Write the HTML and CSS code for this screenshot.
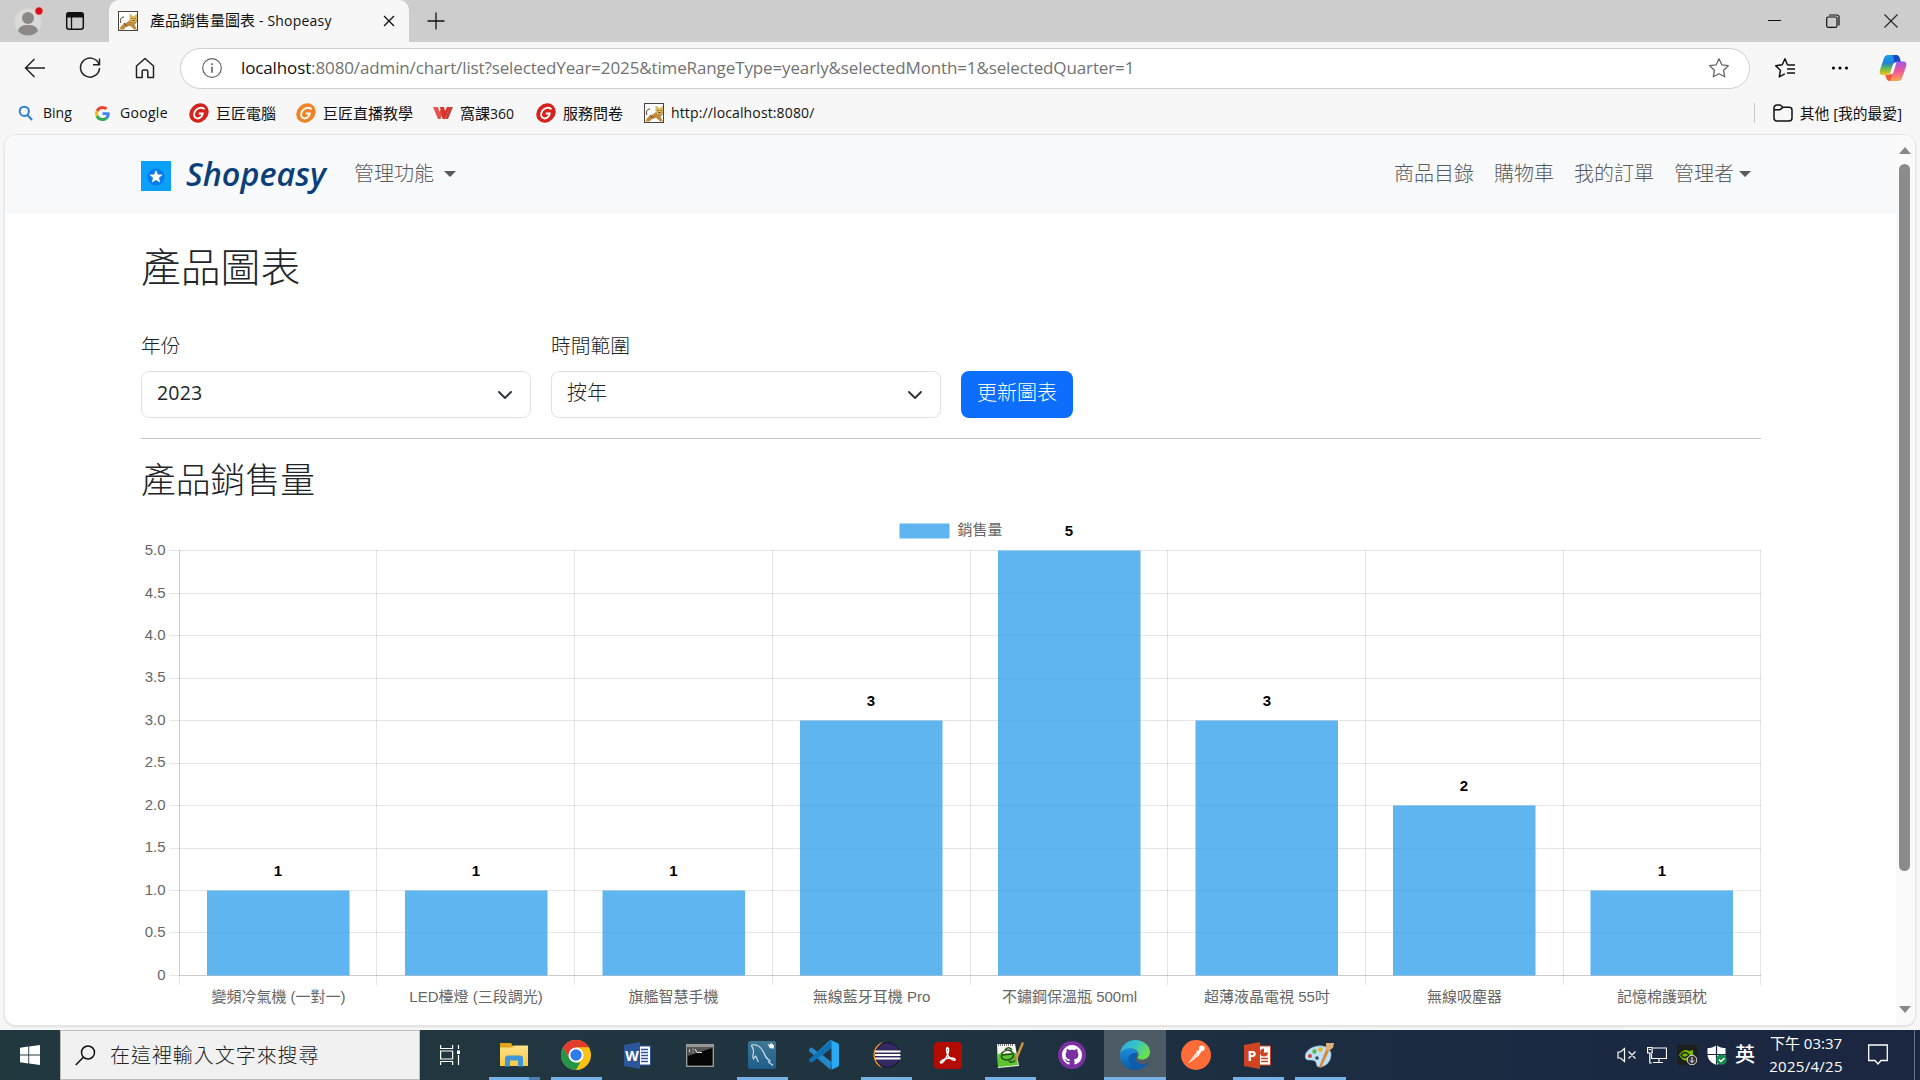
FILE: index.html
```html
<!DOCTYPE html>
<html lang="zh-Hant">
<head>
<meta charset="utf-8">
<title>產品銷售量圖表 - Shopeasy</title>
<link rel="stylesheet" href="styles.css">
</head>
<body>
<svg class="defs" width="0" height="0" aria-hidden="true">
  <defs>
    <linearGradient id="cp1" x1="0" y1="0" x2="0" y2="1"><stop offset="0" stop-color="#1a9ff0"/><stop offset=".4" stop-color="#1f80d8"/><stop offset=".65" stop-color="#5fb85a"/><stop offset="1" stop-color="#f5c31c"/></linearGradient>
    <linearGradient id="cp2" x1="0" y1="0" x2="0" y2="1"><stop offset="0" stop-color="#a05ae8"/><stop offset=".5" stop-color="#f0569a"/><stop offset="1" stop-color="#fba94c"/></linearGradient>
    <linearGradient id="edgeA" x1="0" y1="0" x2="1" y2=".5"><stop offset="0" stop-color="#2ba8e0"/><stop offset=".5" stop-color="#35c3c8"/><stop offset="1" stop-color="#6be04e"/></linearGradient>
    <linearGradient id="edgeB" x1="0" y1="0" x2="0" y2="1"><stop offset="0" stop-color="#1b8fe0"/><stop offset="1" stop-color="#0c59a4"/></linearGradient>
    <linearGradient id="folderG" x1="0" y1="0" x2="0" y2="1"><stop offset="0" stop-color="#ffe08a"/><stop offset="1" stop-color="#fcc93f"/></linearGradient>
    <linearGradient id="mysqlG" x1="0" y1="0" x2="0" y2="1"><stop offset="0" stop-color="#3f7793"/><stop offset="1" stop-color="#1f5e8c"/></linearGradient>
    <symbol id="cat" viewBox="0 0 20 20">
      <rect x=".5" y=".5" width="19" height="19" fill="#fff" stroke="#4a4440"/>
      <path d="M1.500 18.500c1-4 4-6 7-7l3.500-2.500V3l2.500 2h2L19 3v6c0 2-1 3.500-2.500 4.500l2.500 5h-3l-3.500-3.500-4 .5-3 3z" fill="#c08c3c"/>
      <path d="M11.500 3l2.500 2h2.500L19 3v5.500l-2 2.500h-3.500l-2-2.500z" fill="#dcb95e"/>
      <path d="M3 12c-1.500-3 0-6 3-6M6 12l3 3.500M13.500 7.500h1M16.500 7.500h1M14.500 9.500h2" fill="none" stroke="#4b3b2a"/>
    </symbol>
    <symbol id="gjun" viewBox="0 0 20 20">
      <ellipse cx="10" cy="10" rx="10.400" ry="9" transform="rotate(-45 10 10)" fill="currentColor"/>
      <path d="M15.500 6.200C13 3.800 8.500 4.600 6.200 8c-2 3.300-1.200 7 1.800 7.400 2.800.300 5.200-1.600 5.700-4.900H9.800" fill="none" stroke="#fff" stroke-width="1.900"/>
    </symbol>
  </defs>
</svg>

<div class="tabstrip">
  <svg class="profile" width="30" height="30" viewBox="0 0 30 30"><circle cx="15" cy="16" r="13.500" fill="#dcdad8"/><circle cx="15" cy="12" r="6" fill="#8b8885"/><path d="M5 25c1-5 5-6 10-6s9 1 10 6c-5 6-15 6-20 0z" fill="#8b8885"/><circle cx="26" cy="5" r="4.200" fill="#d70f16" stroke="#e9d4d4"/></svg>
  <svg class="workspaces" width="20" height="20" viewBox="0 0 20 20"><rect x="1.700" y="1.700" width="16.600" height="16.600" rx="2.500" fill="none" stroke="#111" stroke-width="1.500"/><path d="M1.500 6.500V4a3 3 0 0 1 3-3h11a3 3 0 0 1 3 3v2.500z" fill="#111"/><path d="M6.500 6v12" stroke="#111" stroke-width="1.300"/></svg>
  <div class="tab">
    <svg width="20" height="20"><use href="#cat"/></svg>
    <span class="tab-title">產品銷售量圖表 <span class="lat">- Shopeasy</span></span>
    <svg class="tab-close" width="12" height="12" viewBox="0 0 12 12"><path d="M1 1l10 10M11 1L1 11" stroke="#111" stroke-width="1.400"/></svg>
  </div>
  <svg class="newtab" width="18" height="18" viewBox="0 0 18 18"><path d="M9 .5v17M.5 9h17" stroke="#111" stroke-width="1.300"/></svg>
  <div class="winctl">
    <svg width="14" height="14" viewBox="0 0 14 14"><path d="M0 6.500h13" stroke="#111"/></svg>
    <svg width="14" height="14" viewBox="0 0 14 14" fill="none" stroke="#111" stroke-width="1.200"><rect x=".7" y="3" width="10.300" height="10.300" rx="1.500"/><path d="M3 1h8a2 2 0 0 1 2 2v8.500"/></svg>
    <svg width="14" height="14" viewBox="0 0 14 14"><path d="M.5.500l13 13M13.500.500l-13 13" stroke="#222" stroke-width="1.100"/></svg>
  </div>
</div>

<div class="toolbar">
  <div class="navbtns">
    <svg width="22" height="22" viewBox="0 0 22 22" fill="none" stroke="#222" stroke-width="1.500"><path d="M21 11H2M10.500 2L1.500 11l9 9"/></svg>
    <svg width="22" height="22" viewBox="0 0 22 22" fill="none" stroke="#222" stroke-width="1.500"><path d="M20 7.500A9.500 9.500 0 1 0 20.500 11M20.500 1.500v6.300H14"/></svg>
    <svg width="22" height="22" viewBox="0 0 22 22" fill="none" stroke="#222" stroke-width="1.500" stroke-linejoin="round"><path d="M2.500 9L11 1.500 19.500 9v11.500h-5.700v-6.200q0-1.300-1.300-1.300h-3q-1.300 0-1.300 1.300v6.200H2.500z"/></svg>
  </div>
  <div class="address">
    <svg width="20" height="20" viewBox="0 0 20 20"><circle cx="10" cy="10" r="9.300" fill="none" stroke="#666" stroke-width="1.200"/><path d="M10 8.700v6M10 5.300v1.600" stroke="#555" stroke-width="1.500"/></svg>
    <span class="url"><b>localhost</b>:8080/admin/chart/list?selectedYear=2025&amp;timeRangeType=yearly&amp;selectedMonth=1&amp;selectedQuarter=1</span>
    <svg width="22" height="22" viewBox="0 0 22 22"><path d="M11 1.800l2.800 6 6.500.9-4.700 4.600 1.100 6.500-5.700-3.100-5.700 3.100 1.100-6.500L1.700 8.700l6.500-.9z" fill="none" stroke="#666" stroke-width="1.300" stroke-linejoin="round"/></svg>
  </div>
  <div class="tools">
    <svg width="22" height="22" viewBox="0 0 22 22" fill="none" stroke="#111" stroke-width="1.500" stroke-linejoin="round"><path d="M13.500 8L11 1.800 8.200 7.800l-6.500.9 4.700 4.600-1.100 6.500 5.500-3M13.500 8H21M13 12h8M13 16h8"/></svg>
    <svg width="22" height="22" viewBox="0 0 22 22"><circle cx="4.500" cy="11" r="1.600"/><circle cx="11" cy="11" r="1.600"/><circle cx="17.500" cy="11" r="1.600"/></svg>
    <svg width="28" height="28" viewBox="0 0 28 28"><path d="M9 1h8c2 0 3 1 4 4l1 4h-5c-2 0-3 1-3.500 3l-2 6c-.7 2-2 3-4 3H4c-3 0-4-2-3-5L5 4c.7-2 2-3 4-3z" fill="url(#cp1)"/><path d="M14 1h3c2 0 3 1 4 4l1 4h-5l-1.500.500z" fill="#1748c8"/><path d="M19 27h-8c-2 0-3-1-4-4l-.5-2h2.500c2 0 3-1 3.500-3l3-9c.7-1 1.500-1.500 3-1.500H24c3 0 4 2 3 5l-4 11.500c-.7 2-2 3-4 3z" fill="url(#cp2)"/><path d="M11 27c-2 0-3-1-4-4l-.5-2H9c2 0 3-1 3.500-3l.5 4z" fill="#f2573c"/><path d="M14 11c.7-2 1.500-2.500 3.500-2.500L14.500 18c-.5 1.500-1 2-3 2.500z" fill="#fff"/></svg>
  </div>
</div>

<div class="bookmarks">
  <div class="bm bing"><svg width="15" height="16" viewBox="0 0 15 16" fill="none" stroke="#2f7fd0" stroke-width="2"><circle cx="6.300" cy="6.300" r="4.600"/><path d="M9.500 10l4.500 5"/></svg><span>Bing</span></div>
  <div class="bm google"><svg width="15" height="15" viewBox="0 0 48 48"><path fill="#EA4335" d="M24 9.500c3.500 0 6.700 1.200 9.200 3.600l6.900-6.900C35.900 2.400 30.500 0 24 0 14.600 0 6.500 5.400 2.600 13.200l8 6.200C12.400 13.700 17.700 9.500 24 9.500z"/><path fill="#4285F4" d="M47 24.600c0-1.600-.2-3.100-.4-4.600H24v9h12.900c-.6 3-2.300 5.500-4.800 7.200l7.700 6C44.400 38 47 32 47 24.600z"/><path fill="#FBBC05" d="M10.500 28.600c-.5-1.500-.8-3-.8-4.600s.3-3.100.8-4.600l-8-6.200C.9 16.500 0 20.100 0 24s.9 7.500 2.600 10.800z"/><path fill="#34A853" d="M24 48c6.500 0 11.900-2.100 15.900-5.800l-7.700-6c-2.200 1.500-4.900 2.300-8.200 2.300-6.300 0-11.600-4.200-13.500-9.900l-8 6.200C6.500 42.600 14.600 48 24 48z"/></svg><span>Google</span></div>
  <div class="bm red"><svg width="20" height="20"><use href="#gjun"/></svg><span>巨匠電腦</span></div>
  <div class="bm orange"><svg width="20" height="20"><use href="#gjun"/></svg><span>巨匠直播教學</span></div>
  <div class="bm"><svg width="20" height="14" viewBox="0 0 20 14"><path d="M0 1h5l1.500 5L8 3l3 0-3.500 10H5z" fill="#e8524c"/><path d="M7 1h4l1 4 2-4h3l-5 12H9.500z" fill="#d9342f"/><path d="M16.500 1H20l-5 12h-3z" fill="#c9403c"/></svg><span>窩課<span class="digits">360</span></span></div>
  <div class="bm red"><svg width="20" height="20"><use href="#gjun"/></svg><span>服務問卷</span></div>
  <div class="bm local"><svg width="20" height="20"><use href="#cat"/></svg><span>http://localhost:8080/</span></div>
  <div class="bm other"><svg width="20" height="18" viewBox="0 0 20 18" fill="none" stroke="#111" stroke-width="1.500"><path d="M1 4a3 3 0 0 1 3-3h3l3 2.300h6a3 3 0 0 1 3 3V14a3 3 0 0 1-3 3H4a3 3 0 0 1-3-3zM1 5.700h6l3-2.400"/></svg><span>其他 [我的最愛]</span></div>
</div>

<div class="frame">
  <div class="page">
    <nav class="navbar">
      <svg class="logo" width="30" height="30" viewBox="0 0 30 30"><rect width="30" height="30" fill="#0aa0fb"/><circle cx="15" cy="16" r="8.500" fill="#0a70e8" opacity=".75"/><path d="M15 9l1.900 4.400 4.700.3-3.600 3.100 1.200 4.700-4.200-2.600-4.200 2.600 1.200-4.700-3.600-3.100 4.700-.3z" fill="#fff"/></svg>
      <span class="brand">Shopeasy</span>
      <span class="link admin">管理功能<i class="caret"></i></span>
      <div class="right">
        <span class="link">商品目錄</span>
        <span class="link">購物車</span>
        <span class="link">我的訂單</span>
        <span class="link user">管理者<i class="caret"></i></span>
      </div>
    </nav>
    <main class="content">
      <h1>產品圖表</h1>
      <form class="filters">
        <div class="field">
          <label>年份</label>
          <div class="select"><span class="num">2023</span><svg width="16" height="16" viewBox="0 0 16 16"><path d="M2 5l6 6 6-6" fill="none" stroke="#343a40" stroke-width="2" stroke-linecap="round" stroke-linejoin="round"/></svg></div>
        </div>
        <div class="field">
          <label>時間範圍</label>
          <div class="select"><span>按年</span><svg width="16" height="16" viewBox="0 0 16 16"><path d="M2 5l6 6 6-6" fill="none" stroke="#343a40" stroke-width="2" stroke-linecap="round" stroke-linejoin="round"/></svg></div>
        </div>
        <button type="button" class="btn">更新圖表</button>
      </form>
      <hr>
      <h2>產品銷售量</h2>
      <svg class="chart" width="1621" height="500" viewBox="0 0 1621 500">
        <g class="grid">
          <path d="M28.500 35.500H1620M28.500 78.500H1620M28.500 120.500H1620M28.500 163.500H1620M28.500 205.500H1620M28.500 248.500H1620M28.500 290.500H1620M28.500 333.500H1620M28.500 375.500H1620M28.500 417.500H1620M28.500 460.500H1620"/>
          <path d="M38.500 35v435M235.500 35v435M433.500 35v435M631.500 35v435M829.500 35v435M1026.500 35v435M1224.500 35v435M1422.500 35v435M1619.500 35v435"/>
          <path d="M38.500 35v425M38 460.500H1620"/>
        </g>
        <g class="bars">
          <rect x="66" y="375.500" width="142.500" height="85"/>
          <rect x="264" y="375.500" width="142.500" height="85"/>
          <rect x="461.500" y="375.500" width="142.500" height="85"/>
          <rect x="659" y="205.500" width="142.500" height="255"/>
          <rect x="857" y="35.500" width="142.500" height="425"/>
          <rect x="1054.500" y="205.500" width="142.500" height="255"/>
          <rect x="1252" y="290.500" width="142.500" height="170"/>
          <rect x="1449.500" y="375.500" width="142.500" height="85"/>
          <rect x="758.500" y="8.500" width="50" height="15"/>
        </g>
        <text class="lbl" x="816.500" y="20">銷售量</text>
        <g class="lbl yt">
          <text x="24.500" y="40">5.0</text><text x="24.500" y="83">4.5</text><text x="24.500" y="125">4.0</text><text x="24.500" y="167">3.5</text><text x="24.500" y="210">3.0</text><text x="24.500" y="252">2.5</text><text x="24.500" y="295">2.0</text><text x="24.500" y="337">1.5</text><text x="24.500" y="380">1.0</text><text x="24.500" y="422">0.5</text><text x="24.500" y="465">0</text>
        </g>
        <g class="lbl xt">
          <text x="137.500" y="487">變頻冷氣機 (一對一)</text><text x="335" y="487">LED檯燈 (三段調光)</text><text x="532.500" y="487">旗艦智慧手機</text><text x="730.500" y="487">無線藍牙耳機 Pro</text><text x="928.500" y="487">不鏽鋼保溫瓶 500ml</text><text x="1126" y="487">超薄液晶電視 55吋</text><text x="1323.500" y="487">無線吸塵器</text><text x="1521" y="487">記憶棉護頸枕</text>
        </g>
        <g class="val">
          <text x="137" y="361">1</text><text x="335" y="361">1</text><text x="532.500" y="361">1</text><text x="730" y="191">3</text><text x="928" y="21">5</text><text x="1126" y="191">3</text><text x="1323" y="276">2</text><text x="1521" y="361">1</text>
        </g>
      </svg>
    </main>
  </div>
  <div class="scrollbar"><i class="up"></i><i class="thumb"></i><i class="down"></i></div>
</div>

<div class="taskbar">
  <div class="start"><svg width="20" height="20" viewBox="0 0 20 20" fill="#fff"><path d="M0 2.800l8.300-1.200v8H0zM9.200 1.500L20 0v9.600H9.200zM0 10.400h8.300v8L0 17.200zM9.200 10.400H20V20L9.200 18.500z"/></svg></div>
  <div class="search"><svg width="21" height="21" viewBox="0 0 21 21" fill="none" stroke="#111" stroke-width="1.500"><circle cx="13" cy="7.500" r="6.500"/><path d="M8.300 12.200L.8 20"/></svg><span>在這裡輸入文字來搜尋</span></div>
  <div class="taskview"><svg width="20" height="20" viewBox="0 0 20 20" fill="none" stroke="#fff" stroke-width="1.200"><path d="M.6 0v3.500h12V0M.6 20v-3.500h12V20M.6 6h12v8H.6zM18.500 0v4M18.500 10v10"/><path d="M17 5.500h3v3.500h-3z" fill="#fff" stroke="none"/></svg></div>
  <div class="apps">
    <div class="app run stack"><svg width="28" height="24" viewBox="0 0 28 24"><path d="M0 0h11l2 3h15v5H0z" fill="#e2a21a"/><path d="M0 4.500h12l2-2h14V23H0z" fill="url(#folderG)"/><path d="M5 23.500v-8q0-3 3-3h12q3 0 3 3v8h-5v-6h-8v6z" fill="#3f97d8"/></svg></div>
    <div class="app run"><svg width="30" height="30" viewBox="0 0 30 30"><circle cx="15" cy="15" r="15" fill="#fbc116"/><path d="M2 7.500A15 15 0 0 1 28 7.500H15L8.500 18.800z" fill="#e33b2e"/><path d="M2 7.500l6.500 11.300 6.500 3.700h6.500L15 30A15 15 0 0 1 2 7.500z" fill="#229547"/><path d="M21.500 18.700L15 30c11 0 17.500-12 13-22.500H15z" fill="#fbc116"/><circle cx="15" cy="15" r="7.500" fill="#fff"/><circle cx="15" cy="15" r="5.700" fill="#2b7de9"/></svg></div>
    <div class="app"><svg width="28" height="27" viewBox="0 0 28 27"><path d="M14 4h12.500v19H14z" fill="#fff" stroke="#2b579a"/><path d="M17 7.500h7M17 10.500h7M17 13.500h7M17 16.500h7M17 19.500h7" stroke="#2b579a" stroke-width="1.300"/><path d="M0 3L16 0v27L0 24z" fill="#2b579a"/><text class="letter" x="8" y="18.500">W</text></svg></div>
    <div class="app"><svg width="28" height="23" viewBox="0 0 28 23"><rect x=".7" y=".7" width="26.600" height="21.600" fill="#050505" stroke="#9a9a9a" stroke-width="1.400"/><path d="M1.500 1.500h25V4L1.500 12z" fill="#555"/><path d="M1 2h26" stroke="#ddd"/><path d="M3.500 5.500v2.500M7 4.800v1M7 7.500v1M9 5l2 3.500h5" stroke="#ddd" fill="none"/></svg></div>
    <div class="app run"><svg width="28" height="28" viewBox="0 0 28 28"><rect width="28" height="28" rx="2.500" fill="url(#mysqlG)"/><path d="M3.500 4c5-1 9 1 12 7 2 5 3 7 6.500 8.500l-1.500 1.500 4.500 3.500M3.500 4c0 2 2 3 2 6s-1.500 5 0 8l2-3c1.500 1.500 1.500 4 3 6" fill="none" stroke="#d5e5ee" stroke-width="1.100"/><path d="M19.500 2.500l2 1.500 1.500-2 3 2.500-.5 3.500-2-1-1.500.5z" fill="#fff"/></svg></div>
    <div class="app"><svg width="30" height="30" viewBox="0 0 100 100"><path d="M75 1c-2-1-5-1-7 1L28 39 10 26c-1.500-1-4-1-5 0L0 31c-2 2-2 4 0 6l71 62 4-26-30-23 30-23z" fill="#2489ca"/><path d="M0 69l5 5c1.500 1 4 1 5.500 0L75 27V1L1 63c-2 2-2 4-1 6z" fill="#1070b3"/><path d="M75 1l21 10c2 1 4 3 4 6v66c0 3-2 5-4 6L75 99z" fill="#2aaaf2"/></svg></div>
    <div class="app run"><svg width="30" height="28" viewBox="0 0 30 28"><path d="M12 .7a14 14 0 0 0 0 26.600A17 17 0 0 1 12 .7z" fill="#f39426"/><circle cx="16.700" cy="14" r="12.500" fill="#332a61" stroke="#16122e"/><path d="M4 10.500h25.500M4 14h25.500M4 17.500h25.500" stroke="#fff" stroke-width="2"/></svg></div>
    <div class="app"><svg width="28" height="27" viewBox="0 0 28 27"><rect width="28" height="27" rx="4" fill="#b30b00"/><path d="M13.500 5.500c1.700.5 1.300 4.500-.3 8-1.700 4-5 8.300-6.500 7.300-1.500-1.300 3-3.800 7.500-4.500s7.300 0 7 1.400c-.5 1.500-4.200 0-6.500-3-2.200-3-2.800-8.500-1.200-9.200z" fill="none" stroke="#fff" stroke-width="1.500"/></svg></div>
    <div class="app run"><svg width="28" height="28" viewBox="0 0 28 28"><path d="M1 3h18l4 22-21 2z" fill="#f7f7f0"/><path d="M2 13l18-1 2 12-20 2z" fill="#5cc431"/><path d="M2 4h16" stroke="#777" stroke-width="2" stroke-dasharray="1 1"/><path d="M5 13c4-5 9-5 12-1 2 4-2 7-6 7s-7-3-5-5l10-1M9 9c2-3 5-3 7 0M12 18c2 5 6 3 7 1" stroke="#254d19" fill="none" stroke-width="1.500"/><path d="M26 1l2 1-7 17-2 1v-2z" fill="#dca343" stroke="#8b5c25" stroke-width=".5"/></svg></div>
    <div class="app"><svg width="28" height="28" viewBox="0 0 28 28"><circle cx="14" cy="14" r="14" fill="#7a30a0"/><path transform="translate(4 4) scale(1.250)" fill="#fff" d="M8 0C3.580 0 0 3.580 0 8c0 3.540 2.290 6.530 5.470 7.590.4.070.55-.17.55-.38 0-.19-.01-.82-.01-1.490-2.010.37-2.530-.49-2.690-.94-.09-.23-.48-.94-.82-1.130-.28-.15-.68-.52-.01-.53.630-.01 1.080.58 1.230.82.720 1.210 1.870.87 2.330.66.070-.52.280-.87.510-1.070-1.780-.2-3.640-.89-3.640-3.950 0-.87.310-1.590.82-2.150-.08-.2-.36-1.020.08-2.120 0 0 .67-.21 2.200.82.640-.18 1.320-.27 2-.27s1.360.09 2 .27c1.530-1.040 2.200-.82 2.200-.82.440 1.100.16 1.920.08 2.120.51.560.82 1.270.82 2.150 0 3.070-1.870 3.750-3.650 3.950.29.250.54.730.54 1.480 0 1.070-.01 1.930-.01 2.200 0 .21.150.46.550.38A8.010 8.010 0 0 0 16 8c0-4.420-3.580-8-8-8z"/></svg></div>
    <div class="app run active"><svg width="30" height="30" viewBox="0 0 30 30"><path d="M0 14C1 5 8 0 15 0c9 0 15 6 15 12 0 5-4 7.500-8 7.500s-5-1.500-4-3c2-3-1-8-7-8-5 0-9 2-11 5.500z" fill="url(#edgeA)"/><path d="M0 14C1 11 5 8.500 10 8.500c4 0 7 2 8 5-5-2-8 2-7 6 1 5 6 8 12 7-3 3-6 3.500-9 3.500C6 30-.5 23 0 14z" fill="url(#edgeB)"/><path d="M18 13.500c-5-2-12 2-9 9 2 5 7 7.500 11 6.500s7-4 8.500-6c-4 2-8 2-11-.5-2.500-2.500-3-6 .5-9z" fill="#0d5cae"/></svg></div>
    <div class="app"><svg width="30" height="30" viewBox="0 0 30 30"><circle cx="15" cy="15" r="15" fill="#ff6c37"/><path d="M7 23l8-10 3.500 2-9 7zM15 12l4-3 1.500 2.500-2.500 3.500z" fill="#fff"/><circle cx="20.800" cy="8.200" r="2.800" fill="#fff"/><path d="M8 22l9-8" stroke="#ff9d78" stroke-width=".8"/></svg></div>
    <div class="app run"><svg width="28" height="27" viewBox="0 0 28 27"><path d="M14 4h12.500v19H14z" fill="#fff" stroke="#d04423"/><path d="M17 16.500h7M17 19.500h7" stroke="#d04423" stroke-width="1.500"/><path d="M20 6.500a4 4 0 1 0 4 4h-4z" fill="#d04423"/><path d="M0 3L16 0v27L0 24z" fill="#d04423"/><text class="letter" x="8" y="18.500">P</text></svg></div>
    <div class="app run"><svg width="30" height="28" viewBox="0 0 30 28"><path d="M13 5c7-1 14 3 13 10-1 7-6 11-12 11-3 0-2-4-4-6-3-2-9 1-10-4C0 10 6 6 13 5z" fill="#bfe0f2" stroke="#7fb2cf" stroke-width=".6"/><circle cx="5" cy="15" r="2" fill="#d8453c"/><circle cx="9.500" cy="10.500" r="2.200" fill="#5bb540"/><circle cx="15.500" cy="8.500" r="2.300" fill="#e8b22c"/><circle cx="12" cy="17" r="1.800" fill="#2d4a66"/><path d="M22 6l3 2-9 19-2-1z" fill="#d88a3a"/><path d="M21 2l8 0-1 5-5 3-2-2z" fill="#d9b077"/></svg></div>
  </div>
  <div class="tray">
    <svg width="20" height="20" viewBox="0 0 20 20" fill="none" stroke="#fff" stroke-width="1.200"><path d="M1 7h2.500L7.500 3.500v13L3.500 13H1zM11.500 6.500l7 7M18.500 6.500l-7 7"/></svg>
    <svg width="20" height="20" viewBox="0 0 20 20" fill="none" stroke="#fff" stroke-width="1.200"><path d="M6 3h13.500v10.500H4.500V9M.6 2.500h4.500V8H.6zM2 4.500h2M12 13.500v4M6 17.500h10M2.800 8v10h2"/></svg>
    <svg width="20" height="20" viewBox="0 0 20 20"><rect width="20" height="20" fill="#1d1f1a"/><path d="M2 10q5-7 10-4l4-1v9q-8 3-11 0z" fill="#76b900"/><path d="M4 10q4-5 8 0-4 5-8 0z" fill="none" stroke="#1d1f1a" stroke-width="1.300"/><circle cx="15" cy="15" r="4.800" fill="#333" stroke="#ddd"/><path d="M15 12v5M13 15.500l2 2 2-2" stroke="#fff" fill="none"/></svg>
    <svg width="20" height="20" viewBox="0 0 20 20"><path d="M9.500 0C7 2.500 3 3 .5 3v6c0 6 4 9 9 11 5-2 9-5 9-11V3c-2.500 0-6.500-.5-9-3z" fill="#fff"/><path d="M9.500 0v20M0 9.500h19" stroke="#1b2640" stroke-width="1.200"/><circle cx="14.500" cy="14.500" r="5.300" fill="#158a4c"/><path d="M12 14.500l2 2 3.500-3.500" fill="none" stroke="#fff" stroke-width="1.300"/></svg>
    <span class="ime">英</span>
    <div class="clock"><span>下午 03:37</span><span class="date">2025/4/25</span></div>
    <svg class="notify" width="20" height="22" viewBox="0 0 20 22" fill="none" stroke="#fff" stroke-width="1.300"><path d="M.7 1h18.600v15.500H13L10 20l-3-3.500H.7z"/></svg>
  </div>
</div>
</body>
</html>
```
FILE: styles.css
```css
* { box-sizing: border-box; }
body {
  margin: 0;
  width: 1920px;
  height: 1080px;
  overflow: hidden;
  display: flex;
  flex-direction: column;
  background: #f7f7f7;
  color: #111;
  font-family: "Open Sans", "Noto Sans CJK TC", sans-serif;
  font-size: 15px;
}
svg { display: block; flex: none; }
.defs { position: absolute; }
span, label { white-space: nowrap; }

/* browser chrome */
.tabstrip { height: 42px; flex: none; display: flex; align-items: center; background: #cdcdcd; padding-left: 13px; }
.workspaces { margin: 0 24px 0 22px; }
.tab { align-self: stretch; width: 300px; padding: 0 14px 0 9px; display: flex; align-items: center; background: #f7f7f7; border-radius: 10px 10px 0 0; }
.tab-title { margin: 0 0 2px 12px; width: 234px; line-height: 20px; }
.lat { font-size: 14px; letter-spacing: .2px; }
.newtab { margin-left: 18px; }
.winctl { margin: 0 22px 0 auto; display: flex; gap: 44px; }

.toolbar { height: 52px; flex: none; display: flex; align-items: center; }
.navbtns { width: 180px; padding-left: 24px; display: flex; gap: 33px; }
.address { width: 1570px; height: 41px; padding: 0 19px 0 21px; border: 1px solid #cfcfcf; border-radius: 21px; background: #fff; display: flex; align-items: center; }
.url { margin-left: 19px; flex: 1; font-size: 17px; line-height: 24px; color: #727272; letter-spacing: -.125px; }
.url b { font-weight: 400; color: #111; }
.tools { margin-left: 24px; display: flex; align-items: center; gap: 33px; }
.tools svg:last-child { margin-left: -5px; }

.bookmarks { height: 40px; flex: none; padding: 0 18px 2px; display: grid; grid-template-columns: 77px 94px 107px 137px 103px 108px 1fr auto; align-items: center; }
.bm { display: flex; align-items: center; gap: 7px; line-height: 20px; font-size: 15px; }
.bm.bing, .bm.google { gap: 10px; font-size: 14px; }
.bm.google { letter-spacing: .3px; }
.bm.local { font-size: 14px; letter-spacing: .13px; }
.digits { font-size: 14px; }
.red { color: #d3231c; }
.orange { color: #f08326; }
.bm span { color: #111; }
.other { border-left: 1px solid #c8c8c8; padding-left: 18px; font-size: 14.800px; }

/* web page */
.frame { height: 892px; flex: none; margin: 0 4px; border: 1px solid #e6e6e6; border-radius: 12px; overflow: hidden; background: #fff; display: flex; box-shadow: 0 1px 2px #ddd; }
.page { flex: 1; font-weight: 300; }
.navbar { height: 78px; padding: 0 145px 0 136px; display: flex; align-items: center; background: #f8f9fb; color: #585b5e; font-size: 20px; }
.logo { margin-top: 3px; }
.brand { margin: 0 0 2px 15px; width: 168px; font-size: 32.400px; line-height: 40px; font-style: italic; font-weight: 600; color: #0b3f7a; }
.link { line-height: 30px; }
.caret { display: inline-block; border: 6px solid transparent; border-top-color: currentColor; border-bottom: 0; vertical-align: 4px; }
.admin .caret { margin-left: 10px; }
.user .caret { margin-left: 5px; }
.right { margin-left: auto; display: flex; gap: 20px; }

.content { width: 1620px; margin-left: 136px; color: #212529; }
h1, h2 { margin: 0; font-weight: 300; }
h1 { margin-top: 30px; font-size: 39.800px; line-height: 48px; }
.filters { margin-top: 40px; display: flex; align-items: flex-end; gap: 20px; }
.field { width: 390px; }
label { display: block; font-size: 19.800px; line-height: 30px; margin-bottom: 10px; }
.select { height: 47px; padding: 0 17px 0 15px; display: flex; align-items: center; justify-content: space-between; border: 1px solid #dee2e6; border-radius: 8px; font-size: 20px; line-height: 30px; }
.select span { margin-bottom: 3px; }
.num { font-size: 19.500px; font-weight: 400; letter-spacing: .2px; }
.btn { width: 112px; height: 47px; padding: 0 0 3px; border: 0; border-radius: 8px; background: #0d6efd; color: #fff; font: 300 20px/30px "Open Sans", "Noto Sans CJK TC", sans-serif; }
hr { height: 1px; margin: 20px 0; border: 0; background: #c4c6c8; }
h2 { font-size: 34.800px; line-height: 42px; }
.chart { margin-top: 14px; }
.grid { fill: none; stroke: rgba(0, 0, 0, .1); }
.bars { fill: rgba(54, 162, 235, .8); }
.lbl { font: 400 15px "Liberation Sans", "Noto Sans CJK TC", sans-serif; fill: #666; }
.yt { text-anchor: end; }
.xt { text-anchor: middle; }
.val { font: bold 15px "Liberation Sans", sans-serif; text-anchor: middle; fill: #000; }

.scrollbar { width: 19px; padding: 12px 2px 12px 0; background: #fafafa; display: flex; flex-direction: column; align-items: center; }
.up, .down { border: 6.500px solid transparent; }
.up { border-top: 0; border-bottom: 7px solid #888; }
.down { border-bottom: 0; border-top: 7px solid #888; margin-top: auto; }
.thumb { margin-top: 10px; width: 11px; height: 707px; border-radius: 6px; background: #8b8b8b; }

/* taskbar */
.taskbar { height: 50px; flex: none; margin-top: 4px; display: flex; background: linear-gradient(90deg, #21383f, #20343f 45%, #1b2942 80%, #1b2640); color: #fff; }
.start { width: 60px; display: grid; place-items: center; }
.search { width: 360px; padding-left: 14px; display: flex; align-items: center; gap: 14px; background: #f1f1f1; border: 1px solid #bbb; color: #222; font-size: 20px; font-weight: 300; letter-spacing: .95px; }
.search span { margin-bottom: 2px; }
.taskview { width: 63px; padding-left: 20px; display: flex; align-items: center; }
.apps { display: grid; grid-template-columns: repeat(14, 62px); }
.app { position: relative; display: grid; place-items: center; }
.run::after { content: ""; position: absolute; left: 6px; bottom: 0; width: 51px; height: 3px; background: #76b2e6; }
.stack::after { background: linear-gradient(90deg, #76b2e6 40px, #4f7fa8 40px); }
.active { background: #4d5b66; margin: 0 -1px 0 1px; }
.active::after { left: 0; width: 62px; }
.letter { font: bold 14px "Open Sans", sans-serif; text-anchor: middle; fill: #fff; }
.tray { margin-left: auto; width: 303px; display: flex; align-items: center; gap: 10px; border-right: 1px solid #66708a; margin-right: 5px; }
.tray > svg:first-child { margin-left: 5px; }
.ime { font-size: 20px; line-height: 30px; width: 20px; margin-left: -2px; font-weight: 500; }
.clock { width: 76px; margin-left: 3px; display: flex; flex-direction: column; text-align: center; font-size: 15px; line-height: 23px; }
.date { letter-spacing: .3px; }
.notify { margin-left: 14px; }
```
